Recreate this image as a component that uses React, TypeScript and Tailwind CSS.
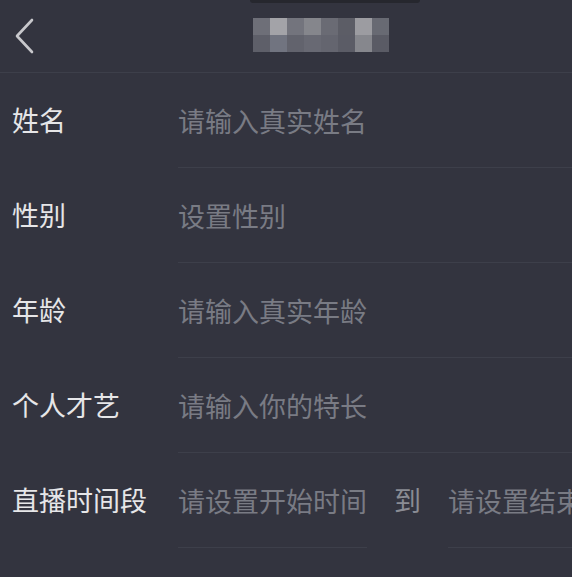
import { useState } from "react";

const mosaic = [
  ["#6e6f78", "#a3a3a8", "#73747d", "#85868c", "#6a6b74", "#5c5d66", "#9c9ca1", "#686a73"],
  ["#5e5f69", "#717480", "#62636d", "#686973", "#64656f", "#5b5c66", "#86878d", "#5a5b65"],
];

const fields = [
  { label: "姓名", placeholder: "请输入真实姓名" },
  { label: "性别", placeholder: "设置性别" },
  { label: "年龄", placeholder: "请输入真实年龄" },
  { label: "个人才艺", placeholder: "请输入你的特长" },
];

const inputCls =
  "h-full border-b border-[#3d3f4a] bg-transparent text-[27px] text-[#e6e6e8] outline-none placeholder:text-[#797b84]";

function App() {
  const [values, setValues] = useState<Record<string, string>>({});

  return (
    <div
      className="min-h-screen w-full overflow-hidden bg-[#33343f]"
      style={{ fontFamily: '"Noto Sans CJK SC", "Noto Sans", sans-serif' }}
    >
      {/* Header */}
      <div className="relative flex h-[73px] items-center border-b border-[#3d3f4a]">
        <div className="absolute left-[250px] top-0 h-[3px] w-[170px] rounded-b-full bg-[#26272e]" />
        <button className="flex h-full w-[60px] items-center pl-[14px]">
          <svg width="20" height="36" viewBox="0 0 20 36" fill="none">
            <path
              d="M18 2 L3 18 L18 34"
              stroke="#c8c8cc"
              strokeWidth="2.6"
              strokeLinecap="round"
              strokeLinejoin="round"
            />
          </svg>
        </button>
        <div className="absolute left-[253px] top-[18px] flex flex-col">
          {mosaic.map((row, i) => (
            <div key={i} className="flex">
              {row.map((c, j) => (
                <div key={j} className="h-[17px] w-[17px]" style={{ backgroundColor: c }} />
              ))}
            </div>
          ))}
        </div>
      </div>

      {/* Form */}
      {fields.map((f) => (
        <div key={f.label} className="flex h-[95px] items-stretch pl-3">
          <div className="flex w-[166px] shrink-0 items-center text-[27px] text-[#e6e6e8]">
            {f.label}
          </div>
          <input
            value={values[f.label] ?? ""}
            onChange={(e) => setValues({ ...values, [f.label]: e.target.value })}
            placeholder={f.placeholder}
            className={inputCls + " min-w-0 flex-1"}
          />
        </div>
      ))}

      <div className="flex h-[95px] items-stretch pl-3">
        <div className="flex w-[166px] shrink-0 items-center whitespace-nowrap text-[27px] text-[#e6e6e8]">
          直播时间段
        </div>
        <input placeholder="请设置开始时间" className={inputCls + " w-[189px] shrink-0"} />
        <div className="flex shrink-0 items-center px-[27px] text-[27px] text-[#8a8c94]">到</div>
        <input placeholder="请设置结束时间" className={inputCls + " min-w-0 flex-1"} />
      </div>
    </div>
  );
}

export default App;
